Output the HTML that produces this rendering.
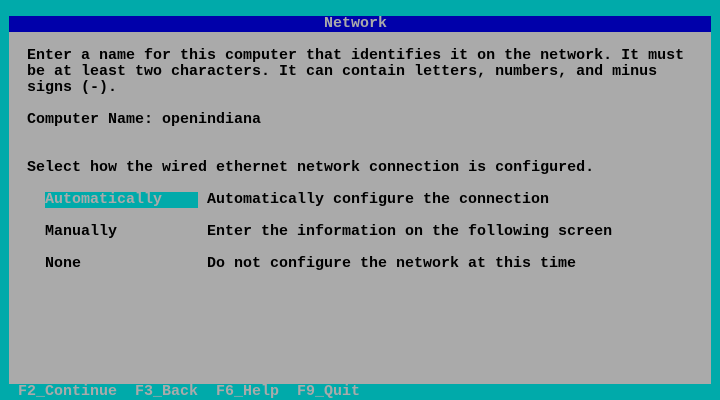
<!DOCTYPE html>
<html><head><meta charset="utf-8"><style>
*{margin:0;padding:0}
body{width:720px;height:400px;background:#00AAAA;position:relative;overflow:hidden;font-family:"Liberation Mono",monospace;font-size:15px;font-weight:bold;}
.l{position:absolute;white-space:pre;height:16px;line-height:16px;color:#000;}
#title{position:absolute;left:9px;top:16px;width:702px;height:16px;background:#0000AA;}
#body{position:absolute;left:9px;top:32px;width:702px;height:352px;background:#AAAAAA;}
</style></head><body>
<div id="title"></div>
<div id="body"></div>
<div class="l" style="left:324px;top:16px;color:#AAAAAA">Network</div>
<div class="l" style="left:27px;top:48px">Enter a name for this computer that identifies it on the network. It must</div>
<div class="l" style="left:27px;top:64px">be at least two characters. It can contain letters, numbers, and minus</div>
<div class="l" style="left:27px;top:80px">signs (-).</div>
<div class="l" style="left:27px;top:112px">Computer Name: openindiana</div>
<div class="l" style="left:27px;top:160px">Select how the wired ethernet network connection is configured.</div>
<div class="l" style="left:45px;top:192px;width:153px;background:#00AAAA;color:#AAAAAA">Automatically</div>
<div class="l" style="left:207px;top:192px">Automatically configure the connection</div>
<div class="l" style="left:45px;top:224px">Manually</div>
<div class="l" style="left:207px;top:224px">Enter the information on the following screen</div>
<div class="l" style="left:45px;top:256px">None</div>
<div class="l" style="left:207px;top:256px">Do not configure the network at this time</div>
<div class="l" style="left:18px;top:384px;color:#AAAAAA">F2_Continue  F3_Back  F6_Help  F9_Quit</div>
</body></html>
